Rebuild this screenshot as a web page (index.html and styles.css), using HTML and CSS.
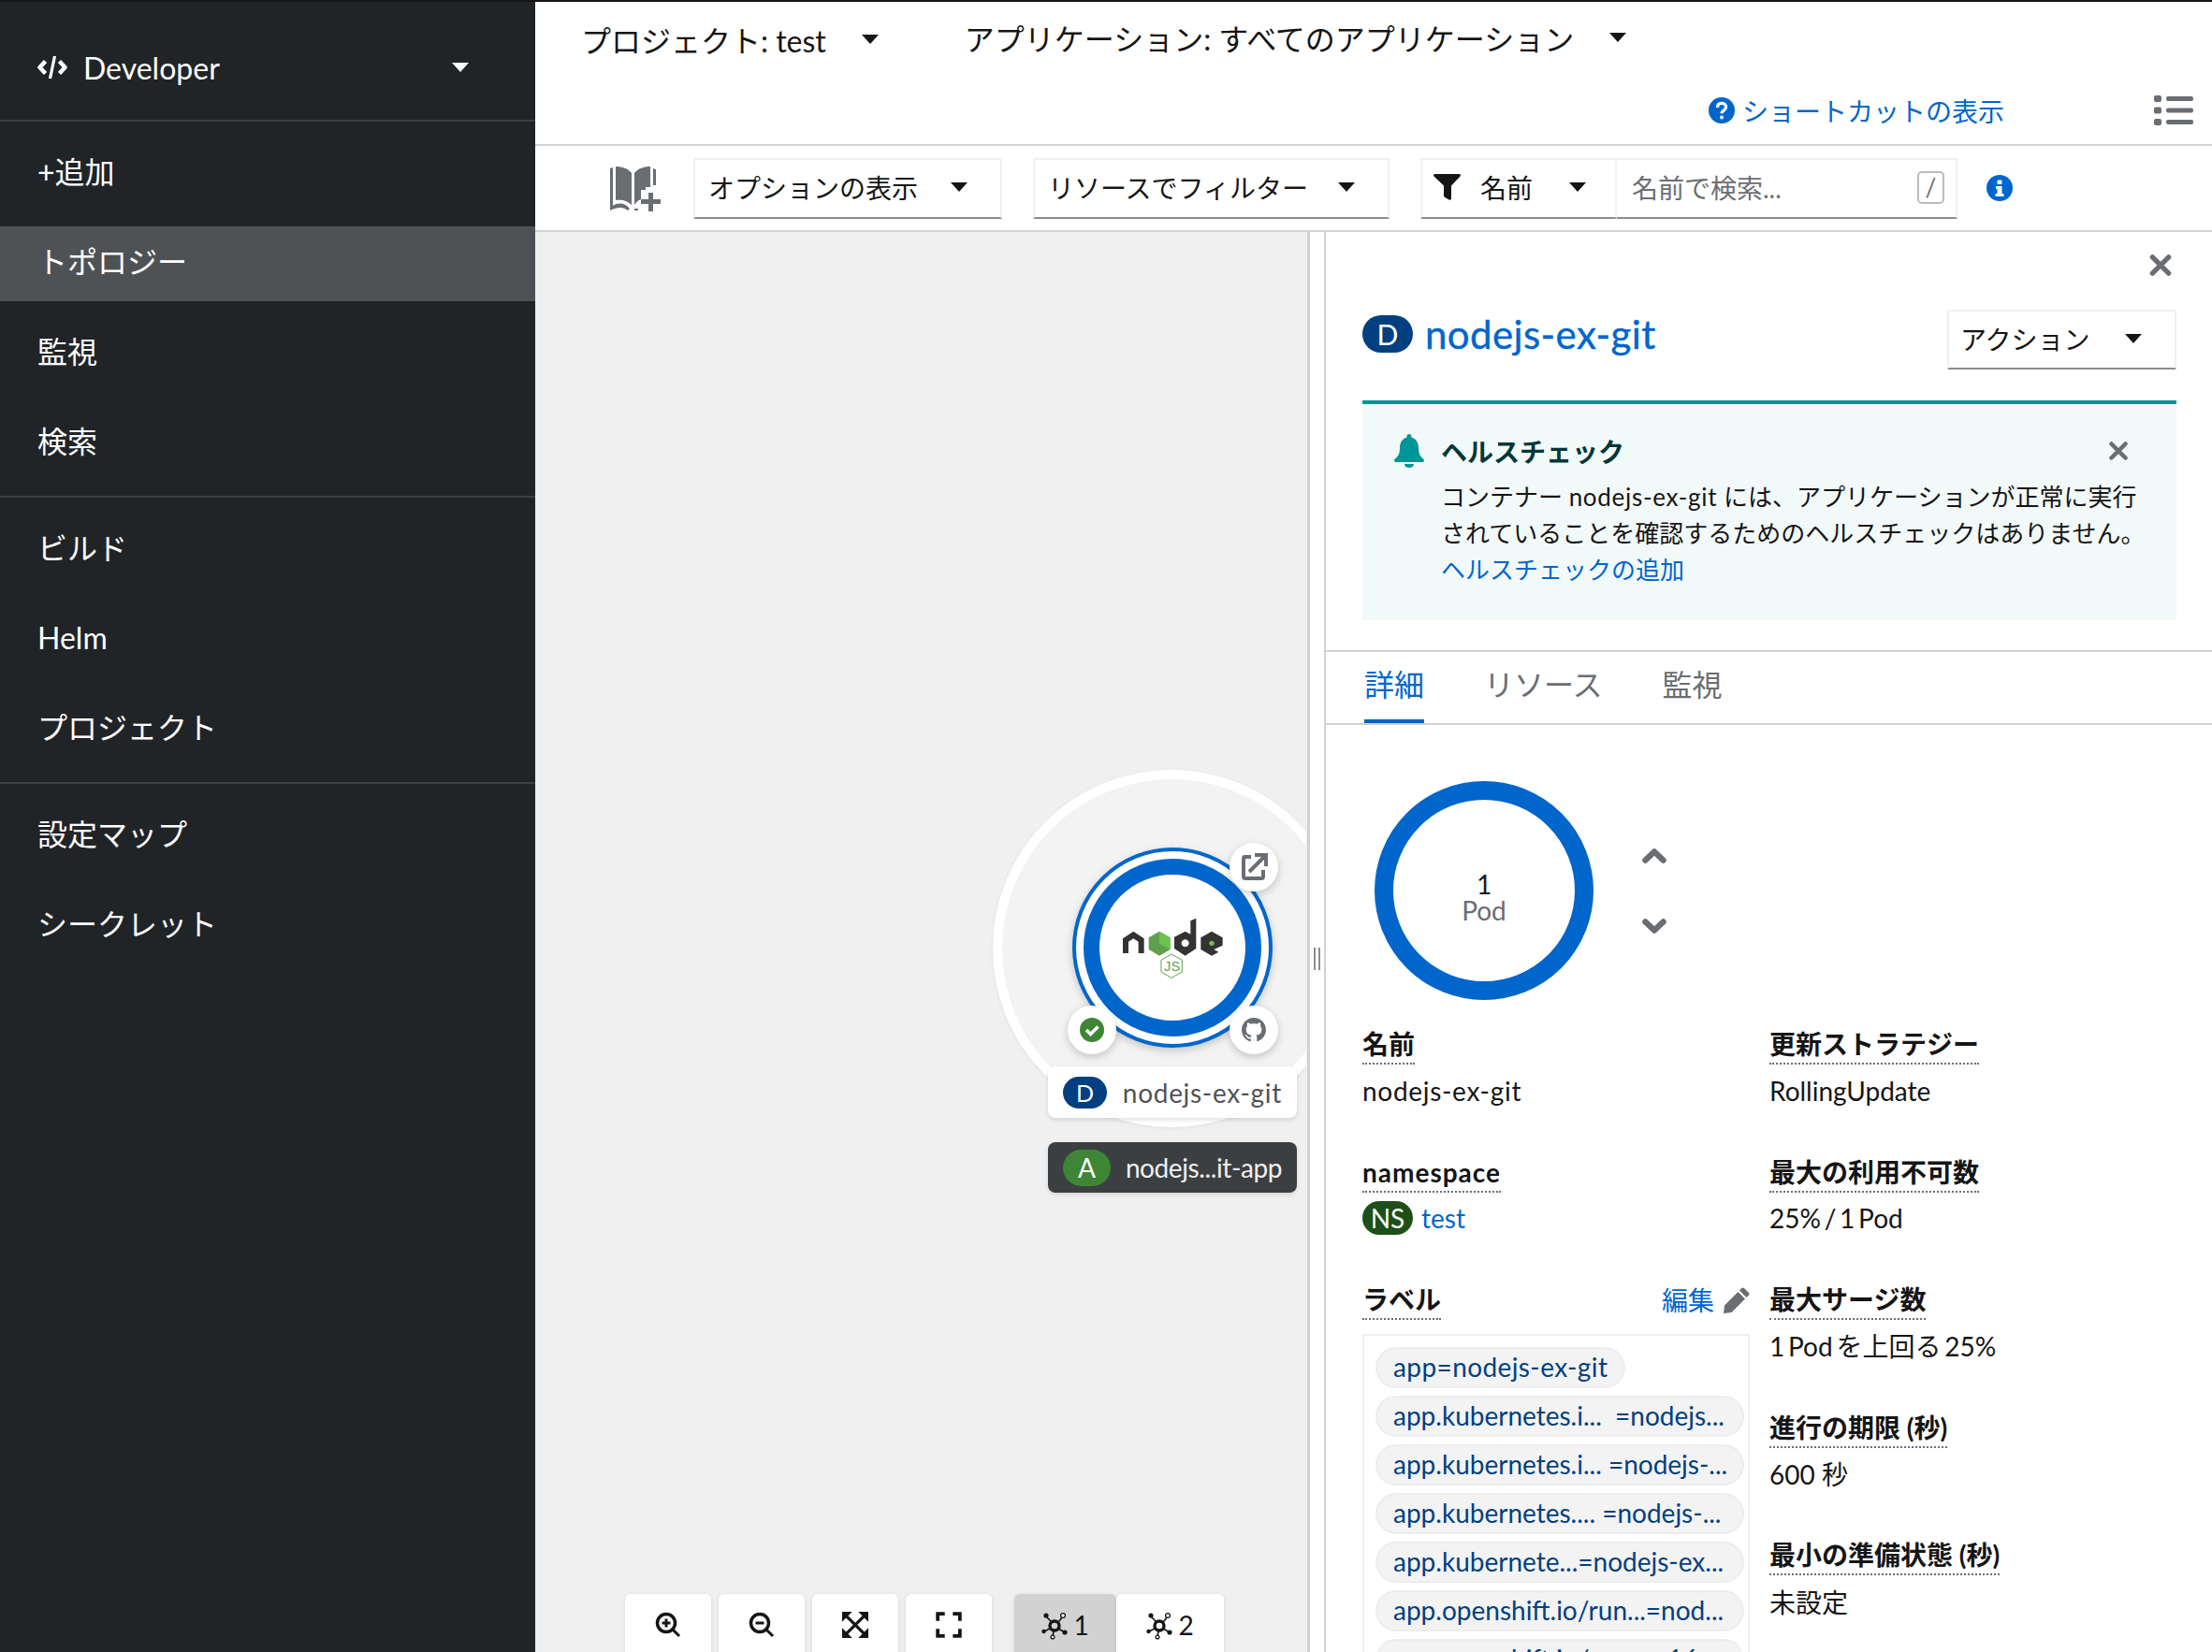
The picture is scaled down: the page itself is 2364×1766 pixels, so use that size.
FILE: index.html
```html
<!DOCTYPE html>
<html lang="ja">
<head>
  <meta charset="UTF-8" />
  <meta name="viewport" content="width=device-width, initial-scale=1.0"/>
  <title>トポロジー - Developer</title>
  <link rel="stylesheet" href="styles.css">
</head>
<body>

  <!-- Shared icons -->
  <svg class="defs" width="0" height="0">
    <symbol id="i-close" viewBox="0 0 24 24"><path d="M3 3 21 21M21 3 3 21" fill="none" stroke="currentColor" stroke-width="5.5" stroke-linecap="round"/></symbol>
    <symbol id="i-topology" viewBox="0 0 28 30">
      <g fill="none" stroke="currentColor" stroke-width="1.6"><path d="M5 5 11 11M18 11 23 5M9 18 3 21M18 18 25 22M13 21 12 26"/></g>
      <circle cx="14" cy="15" r="5" fill="none" stroke="currentColor" stroke-width="3.4"/>
      <circle cx="5" cy="4" r="2.6" fill="currentColor"/><circle cx="23" cy="4" r="2.4" fill="#fff" stroke="currentColor" stroke-width="1.3"/>
      <circle cx="2.5" cy="21" r="2.2" fill="currentColor"/><circle cx="25" cy="22" r="2.6" fill="currentColor"/>
      <circle cx="12" cy="27" r="1.9" fill="#fff" stroke="currentColor" stroke-width="1.3"/>
    </symbol>
  </svg>

  <div class="app">

    <!-- Sidebar -->
    <div class="sidebar">
      <div class="perspective">
        <svg class="code-icon" viewBox="0 0 32 28"><path d="M8.500 7.500 2.500 14l6 6.500M23.500 7.500l6 6.500-6 6.500" fill="none" stroke="#fff" stroke-width="4.500" stroke-linejoin="round"/><path d="M18.500 2 13.500 26" fill="none" stroke="#fff" stroke-width="3.200"/></svg>
        <span>Developer</span>
        <i class="caret caret-white"></i>
      </div>
      <div class="nav-group">
        <a class="nav-item">+追加</a>
        <a class="nav-item active">トポロジー</a>
        <a class="nav-item">監視</a>
        <a class="nav-item">検索</a>
      </div>
      <div class="nav-group">
        <a class="nav-item">ビルド</a>
        <a class="nav-item">Helm</a>
        <a class="nav-item">プロジェクト</a>
      </div>
      <div class="nav-group last">
        <a class="nav-item">設定マップ</a>
        <a class="nav-item">シークレット</a>
      </div>
    </div>

    <div class="main">

      <!-- Project bar -->
      <div class="topbar">
        <div class="selectors">
          <div class="selector project">プロジェクト: test<i class="caret"></i></div>
          <div class="selector">アプリケーション: すべてのアプリケーション<i class="caret"></i></div>
        </div>
        <div class="shortcuts">
          <a class="shortcut-link">
            <svg class="round-icon" viewBox="0 0 28 28"><circle cx="14" cy="14" r="14" fill="#06c"/><path d="M9.5 11c0-3 2-4.600 4.600-4.600s4.500 1.600 4.500 4.200c0 3.600-4.600 3.400-4.600 6.600" fill="none" stroke="#fff" stroke-width="3.200"/><circle cx="14" cy="21.500" r="2" fill="#fff"/></svg>
            ショートカットの表示
          </a>
          <svg class="list-icon" viewBox="0 0 42 32"><g fill="#6a6e73"><rect x="0" y="0" width="8" height="7" rx="2"/><rect x="0" y="12.500" width="8" height="7" rx="2"/><rect x="0" y="25" width="8" height="7" rx="2"/><rect x="13" y="1" width="29" height="5" rx="2"/><rect x="13" y="13.500" width="29" height="5" rx="2"/><rect x="13" y="26" width="29" height="5" rx="2"/></g></svg>
        </div>
      </div>

      <!-- Toolbar -->
      <div class="toolbar">
        <svg class="book-icon" viewBox="0 0 56 50">
          <path d="M0 4 3 3V44C9 40 16 41 21 47L19 49C14 45 8 45 0 49ZM6 2C13 2 19 4 23 9V43C18 38 12 37 6 38ZM43 2V24H38V27H33V37C30 38 28 40 26 43V9C30 4 36 2 43 2ZM46 4 49 5V22H46Z" fill="#6a6e73"/>
          <path d="M41 30h5v7h8v5h-8v8h-5v-8h-8v-5h8zM26 47h4v2h-4z" fill="#6a6e73"/>
        </svg>
        <div class="dropdown dd-options">オプションの表示<i class="caret"></i></div>
        <div class="dropdown dd-resources">リソースでフィルター<i class="caret"></i></div>
        <div class="filter-group">
          <div class="dropdown name-filter">
            <svg class="filter-icon" viewBox="0 0 29 28"><path d="M1.500 0h26c1.300 0 1.900 1.500 1 2.400L19 12.500V26c0 1.300-1.300 2.300-2.500 1.500l-5-3c-.6-.4-.5-.9-.5-1.500V12.500L.5 2.400C-.4 1.500.2 0 1.500 0z" fill="#151515"/></svg>
            名前<i class="caret"></i>
          </div>
          <div class="search-input">
            <span>名前で検索...</span>
            <span class="slash-key">/</span>
          </div>
        </div>
        <svg class="info-icon" viewBox="0 0 28 28"><circle cx="14" cy="14" r="14" fill="#06c"/><rect x="11.500" y="5.500" width="5" height="4.500" rx="1" fill="#fff"/><path d="M10 12h6.500v8H18.500v3H9.500v-3h2v-5H10z" fill="#fff"/></svg>
      </div>

      <div class="workspace">

        <!-- Topology canvas -->
        <div class="canvas">
          <svg class="graph" width="824" height="1518">
            <circle class="group-ring" cx="680" cy="766" r="186"/>
            <g class="soft-shadow">
              <circle cx="681" cy="765" r="105" fill="#fff" stroke="#06c" stroke-width="4"/>
              <circle cx="681" cy="765" r="86.500" fill="#fff" stroke="#06c" stroke-width="17"/>
            </g>
            <!-- node logo -->
            <g transform="translate(468 552) scale(.3333)">
              <polygon points="480,610 514,587 548,610 548,657 530,657 530,620 514,610 498,620 498,657 480,657" fill="#333"/>
              <polygon points="597,587 632,607 632,645 597,665 563,645 563,607" fill="#5fa04e"/>
              <polygon points="597,587 632,607 632,645 597,626" fill="#6cc24a"/>
              <path d="M715 545V642L680 665 645 642V605L680 587 697 596V553ZM680 613a12 12 0 1 0 .01 0Z" fill="#333" fill-rule="evenodd"/>
              <polygon points="730,607 765,587 800,607 800,632 772,645 787,653 765,665 730,645" fill="#333"/>
              <circle cx="765" cy="625" r="8" fill="#6cc24a"/>
              <polygon points="636,660 670,679 670,717 636,736 603,717 603,679" fill="#fff" stroke="#5fa04e" stroke-width="3"/>
              <text x="638" y="714" text-anchor="middle" class="js-mark">JS</text>
            </g>
            <!-- decorators -->
            <g class="soft-shadow">
              <circle cx="768" cy="679" r="26" fill="#fff"/>
              <circle cx="595" cy="853" r="26" fill="#fff"/>
              <circle cx="768" cy="853" r="26" fill="#fff"/>
            </g>
            <path d="M765 668H758Q757 668 757 670V689Q757 691 759 691H776Q778 691 778 689V682M763 684 779 668M769 666H781V678" fill="none" stroke="#6a6e73" stroke-width="4"/>
            <circle cx="595" cy="853" r="13" fill="#3e8635"/>
            <path d="M589 853l4.500 4.500 8-8" fill="none" stroke="#fff" stroke-width="3.500"/>
            <svg x="755" y="840" width="26" height="26" viewBox="0 0 16 16"><path fill="#6a6e73" d="M8 0C3.58 0 0 3.58 0 8c0 3.540 2.290 6.530 5.470 7.590.4.070.55-.17.55-.38 0-.19-.01-.82-.01-1.490-2.010.37-2.530-.49-2.690-.94-.09-.23-.48-.94-.82-1.130-.28-.15-.68-.52-.01-.53.63-.01 1.080.58 1.230.82.720 1.210 1.870.87 2.330.66.070-.52.28-.87.51-1.070-1.780-.2-3.640-.89-3.640-3.950 0-.87.31-1.590.82-2.150-.08-.2-.36-1.020.08-2.120 0 0 .67-.21 2.200.82.64-.18 1.320-.27 2-.27.68 0 1.360.09 2 .27 1.530-1.040 2.200-.82 2.200-.82.44 1.100.16 1.920.08 2.120.51.56.82 1.270.82 2.150 0 3.070-1.870 3.750-3.650 3.950.29.25.54.73.54 1.480 0 1.070-.01 1.930-.01 2.200 0 .21.15.46.55.38A8.013 8.013 0 0016 8c0-4.420-3.580-8-8-8z"/></svg>
          </svg>

          <div class="node-label">
            <span class="badge badge-d">D</span>
            <span class="wide-latin">nodejs-ex-git</span>
          </div>
          <div class="node-label app-label">
            <span class="badge badge-a">A</span>
            <span class="narrow-latin">nodejs...it-app</span>
          </div>

          <div class="controls">
            <div class="ctrl">
              <svg viewBox="0 0 28 28"><circle cx="12" cy="12" r="9.500" fill="none" stroke="#151515" stroke-width="3.500"/><path d="M12 7.500v9M7.500 12h9M19 19l7 7" fill="none" stroke="#151515" stroke-width="3"/></svg>
            </div>
            <div class="ctrl">
              <svg viewBox="0 0 28 28"><circle cx="12" cy="12" r="9.500" fill="none" stroke="#151515" stroke-width="3.500"/><path d="M7.500 12h9M19 19l7 7" fill="none" stroke="#151515" stroke-width="3"/></svg>
            </div>
            <div class="ctrl">
              <svg viewBox="0 0 26 26"><path d="M0 0H10L0 10ZM26 0V10L16 0ZM0 26V16L10 26ZM26 26H16L26 16Z" fill="#151515"/><path d="M4 4 22 22M22 4 4 22" fill="none" stroke="#151515" stroke-width="3"/></svg>
            </div>
            <div class="ctrl">
              <svg viewBox="0 0 26 26"><path d="M2 9V2H9M17 2H24V9M2 17V24H9M17 24H24V17" fill="none" stroke="#151515" stroke-width="3.500"/></svg>
            </div>
            <div class="ctrl-pair">
              <div class="ctrl ctrl-first selected"><svg class="topo-svg"><use href="#i-topology"/></svg>1</div>
              <div class="ctrl ctrl-second"><svg class="topo-svg"><use href="#i-topology"/></svg>2</div>
            </div>
          </div>
        </div>

        <!-- Resize handle -->
        <div class="splitter"><span class="grip"></span></div>

        <!-- Side panel -->
        <div class="panel">
          <div class="panel-close"><svg class="close-icon"><use href="#i-close"/></svg></div>

          <div class="panel-head">
            <div class="panel-title">
              <span class="badge badge-d badge-lg">D</span>
              <a class="title-link">nodejs-ex-git</a>
            </div>
            <div class="dropdown">アクション<i class="caret"></i></div>
          </div>

          <div class="alert">
            <svg class="bell-icon" viewBox="0 0 32 36"><path d="M16 0c1.500 0 2.500 1 2.500 2.500v1.300C24 5 26 10 26 15c0 6 2 9 5.500 12 .8.8.5 3-1.500 3H2c-2 0-2.300-2.200-1.500-3C4 24 6 21 6 15c0-5 2-10 7.500-11.200V2.500C13.500 1 14.500 0 16 0zM11 32h10c0 2.500-2.200 4-5 4s-5-1.500-5-4z" fill="#009596"/></svg>
            <div class="alert-body">
              <div class="alert-title">ヘルスチェック</div>
              <p>コンテナー <span class="wide-latin">nodejs-ex-git</span> には、アプリケーションが正常に実行<br>されていることを確認するためのヘルスチェックはありません。</p>
              <a class="link">ヘルスチェックの追加</a>
            </div>
            <svg class="alert-close"><use href="#i-close"/></svg>
          </div>

          <div class="tabs">
            <div class="tab active">詳細</div>
            <div class="tab">リソース</div>
            <div class="tab">監視</div>
          </div>

          <div class="pod-row">
            <div class="pod-ring">
              <span class="pod-count">1</span>
              <span class="pod-unit">Pod</span>
            </div>
            <div class="pod-arrows">
              <svg viewBox="0 0 26 16"><path d="M3.500 12.500 13 3.500 22.500 12.500" fill="none" stroke="#6a6e73" stroke-width="6.500" stroke-linecap="round" stroke-linejoin="round"/></svg>
              <svg viewBox="0 0 26 16"><path d="M3.500 3.500 13 12.500 22.500 3.500" fill="none" stroke="#6a6e73" stroke-width="6.500" stroke-linecap="round" stroke-linejoin="round"/></svg>
            </div>
          </div>

          <div class="details">
            <div class="details-col left">
              <div class="field">
                <div class="field-label"><span>名前</span></div>
                <div class="field-value"><span class="wide-latin">nodejs-ex-git</span></div>
              </div>
              <div class="field">
                <div class="field-label"><span class="wide-latin">namespace</span></div>
                <div class="field-value"><span class="badge badge-ns">NS</span><a class="link">test</a></div>
              </div>
              <div class="field-label label-row">
                <span>ラベル</span>
                <a class="edit-link">編集
                  <svg viewBox="0 0 28 28"><path d="M22 1l5 5c.8.8.8 1.800 0 2.600l-2.500 2.500-7.600-7.600L19.400 1c.8-.8 1.800-.8 2.600 0zM15.500 5l7.500 7.500L8.500 27 0 28l1-8.500z" fill="#6a6e73"/></svg>
                </a>
              </div>
              <div class="chips">
                <span class="chip first-chip">app=nodejs-ex-git</span>
                <span class="chip wide">app.kubernetes.i...&nbsp; =nodejs...</span>
                <span class="chip wide">app.kubernetes.i... =nodejs-...</span>
                <span class="chip wide">app.kubernetes.... =nodejs-...</span>
                <span class="chip wide">app.kubernete...=nodejs-ex...</span>
                <span class="chip wide">app.openshift.io/run...=nod...</span>
                <span class="chip wide">app.openshift.io/run... =16...</span>
              </div>
            </div>
            <div class="details-col">
              <div class="field">
                <div class="field-label"><span>更新ストラテジー</span></div>
                <div class="field-value">RollingUpdate</div>
              </div>
              <div class="field">
                <div class="field-label"><span>最大の利用不可数</span></div>
                <div class="field-value tight-words">25% / 1 Pod</div>
              </div>
              <div class="field">
                <div class="field-label"><span>最大サージ数</span></div>
                <div class="field-value tight-words">1 Pod を上回る 25%</div>
              </div>
              <div class="field">
                <div class="field-label"><span>進行の期限 (秒)</span></div>
                <div class="field-value">600 秒</div>
              </div>
              <div class="field">
                <div class="field-label"><span>最小の準備状態 (秒)</span></div>
                <div class="field-value">未設定</div>
              </div>
            </div>
          </div>
        </div>

      </div>
    </div>
  </div>

</body>
</html>
```

FILE: styles.css
```css
* {
  box-sizing: border-box;
}

html, body {
  height: 100%;
  margin: 0;
}

body {
  font-family: Lato, "Noto Sans CJK JP", sans-serif;
  font-size: 28px;
  color: #151515;
  background: #fff;
  overflow: hidden;
}

a {
  text-decoration: none;
}

p {
  margin: 0;
}

.defs {
  position: absolute;
}

.wide-latin {
  letter-spacing: 0.7px;
}

.narrow-latin {
  letter-spacing: -0.4px;
}

.tight-words {
  word-spacing: -3.4px;
}

.app {
  display: flex;
  width: 2364px;
  height: 1766px;
  border-top: 2px solid #151515;
  overflow: hidden;
}

.caret {
  display: inline-block;
  width: 0;
  height: 0;
  border-left: 9px solid transparent;
  border-right: 9px solid transparent;
  border-top: 10px solid #151515;
  flex-shrink: 0;
}

.caret-white {
  border-top-color: #fff;
}

/* Sidebar */
.sidebar {
  width: 572px;
  flex-shrink: 0;
  background: #212427;
  color: #fff;
  font-size: 32px;
}

.perspective {
  height: 128px;
  display: flex;
  align-items: center;
  padding: 14px 71px 0 40px;
  border-bottom: 2px solid #3c3f42;
}

.code-icon {
  width: 32px;
  height: 28px;
  margin-right: 17px;
}

.perspective .caret {
  margin-left: auto;
}

.nav-group {
  display: flex;
  flex-direction: column;
  gap: 16px;
  padding: 16px 0;
  border-bottom: 2px solid #3c3f42;
}

.nav-group.last {
  border-bottom: none;
}

.nav-item {
  height: 80px;
  line-height: 76px;
  padding-left: 40px;
  color: #fff;
}

.nav-item.active {
  background: #4f5255;
}

/* Main */
.main {
  flex: 1;
  display: flex;
  flex-direction: column;
  min-width: 0;
}

.topbar {
  height: 154px;
  border-bottom: 2px solid #d2d2d2;
  flex-shrink: 0;
}

.selectors {
  display: flex;
  height: 78px;
  padding-left: 49px;
  align-items: center;
  font-size: 32px;
}

.selector {
  display: flex;
  align-items: center;
  gap: 38px;
  margin-right: 92px;
  margin-top: -2px;
}

.selector.project {
  margin-top: 2px;
}

.shortcuts {
  display: flex;
  align-items: center;
  justify-content: flex-end;
  height: 76px;
  padding-right: 20px;
}

.shortcut-link {
  display: flex;
  align-items: center;
  gap: 8px;
  color: #06c;
  margin-right: 160px;
}

.round-icon {
  width: 28px;
  height: 28px;
}

.list-icon {
  width: 42px;
  height: 32px;
}

.toolbar {
  height: 92px;
  flex-shrink: 0;
  display: flex;
  align-items: center;
  gap: 33px;
  padding-left: 80px;
  border-bottom: 2px solid #d2d2d2;
}

.book-icon {
  width: 56px;
  height: 50px;
}

.dropdown {
  height: 65px;
  display: flex;
  align-items: center;
  justify-content: space-between;
  padding: 0 35px 2px 14px;
  border: 2px solid #f0f0f0;
  border-bottom-color: #8a8d90;
  background: #fff;
  white-space: nowrap;
  flex-shrink: 0;
}

.dd-options {
  width: 330px;
}

.dd-resources {
  width: 381px;
}

.filter-group {
  display: flex;
}

.name-filter {
  width: 210px;
  padding-left: 12px;
  justify-content: flex-start;
}

.filter-icon {
  width: 29px;
  height: 28px;
  margin-right: 21px;
  flex-shrink: 0;
}

.name-filter .caret {
  margin-left: 39px;
}

.search-input {
  width: 364px;
  height: 65px;
  display: flex;
  align-items: center;
  justify-content: space-between;
  padding: 0 12px 2px 16px;
  border: 2px solid #f0f0f0;
  border-left: none;
  border-bottom-color: #8a8d90;
  color: #6a6e73;
}

.slash-key {
  width: 29px;
  height: 35px;
  border: 2px solid #b8bbbe;
  border-radius: 5px;
  text-align: center;
  line-height: 30px;
  font-size: 26px;
}

.info-icon {
  width: 28px;
  height: 28px;
  margin-left: -2px;
}

/* Topology canvas and panel */
.workspace {
  flex: 1;
  display: flex;
  min-height: 0;
}

.canvas {
  position: relative;
  width: 825px;
  flex-shrink: 0;
  background: #f0f0f0;
  overflow: hidden;
}

.graph {
  position: absolute;
  left: 0;
  top: 0;
}

.group-ring {
  fill: #f3f3f3;
  stroke: #fff;
  stroke-width: 10px;
  filter: drop-shadow(0 1px 2px rgba(0,0,0,0.06));
}

.soft-shadow {
  filter: drop-shadow(0 3px 4px rgba(3,3,3,0.2));
}

.js-mark {
  font-family: "Liberation Sans", sans-serif;
  font-size: 44px;
  fill: #5fa04e;
}

.node-label {
  position: absolute;
  left: 548px;
  top: 892px;
  width: 266px;
  height: 55px;
  display: flex;
  align-items: center;
  justify-content: space-between;
  padding: 0 16px;
  background: #fff;
  border-radius: 8px;
  color: #4f5255;
  box-shadow: 0 2px 5px rgba(3,3,3,0.12);
}

.app-label {
  top: 973px;
  height: 54px;
  background: #3c3f42;
  color: #f0f0f0;
}

.badge {
  display: inline-flex;
  align-items: center;
  justify-content: center;
  color: #fff;
  border-radius: 20px;
}

.badge-d {
  width: 47px;
  height: 34px;
  background: #004080;
  font-size: 25px;
}

.badge-a {
  width: 51px;
  height: 39px;
  background: #3e8635;
}

.badge-lg {
  width: 54px;
  height: 40px;
  font-size: 30px;
}

.badge-ns {
  width: 54px;
  height: 36px;
  background: #1e4f18;
  margin-right: 9px;
}

.controls {
  position: absolute;
  left: 96px;
  top: 1456px;
  display: flex;
  gap: 8px;
}

.ctrl {
  width: 92px;
  height: 100px;
  background: #fff;
  border-radius: 6px;
  padding-top: 19px;
  display: flex;
  justify-content: center;
  align-items: flex-start;
  gap: 6px;
  line-height: 28px;
  box-shadow: 0 1px 4px rgba(3,3,3,0.12);
}

.ctrl svg {
  width: 28px;
  height: 28px;
}

.ctrl-pair {
  display: flex;
  margin-left: 16px;
}

.ctrl .topo-svg {
  width: 28px;
  height: 30px;
}

.ctrl-first {
  width: 109px;
}

.ctrl-second {
  width: 115px;
}

.ctrl-first.selected {
  background: #d2d2d2;
}

.splitter {
  width: 20px;
  flex-shrink: 0;
  display: flex;
  align-items: flex-start;
  justify-content: center;
  background: #fff;
  border-left: 3px solid #d2d2d2;
  border-right: 2px solid #d2d2d2;
}

.grip {
  width: 7px;
  height: 24px;
  margin-top: 765px;
  border-left: 2px solid #8a8d90;
  border-right: 2px solid #8a8d90;
}

.panel {
  flex: 1;
  min-width: 0;
  padding: 0 38px 0 39px;
  overflow: hidden;
}

.panel-close {
  display: flex;
  justify-content: flex-end;
  height: 47px;
  padding: 24px 5px 0 0;
  margin-bottom: 36px;
}

.close-icon {
  width: 24px;
  height: 23px;
  color: #6a6e73;
}

.panel-head {
  display: flex;
  justify-content: space-between;
  align-items: flex-start;
  margin-bottom: 33px;
}

.panel-head .dropdown {
  width: 245px;
  height: 64px;
  padding-left: 12px;
}

.panel-title {
  display: flex;
  align-items: center;
  height: 52px;
  gap: 13px;
}

.title-link {
  font-size: 42px;
  letter-spacing: 0.4px;
  -webkit-text-stroke: 0.4px #06c;
  color: #06c;
}

.alert {
  position: relative;
  display: flex;
  height: 235px;
  padding: 32px 0 0 34px;
  background: #f2f9f9;
  border-top: 4px solid #009596;
  font-size: 26px;
  line-height: 39px;
}

.bell-icon {
  width: 32px;
  height: 36px;
  margin-right: 18px;
  flex-shrink: 0;
}

.alert-title {
  font-size: 28px;
  font-weight: 700;
  color: #003737;
  line-height: 38px;
  margin-bottom: 10px;
}

.alert-close {
  position: absolute;
  right: 52px;
  top: 40px;
  width: 20px;
  height: 20px;
  color: #6a6e73;
}

.link {
  color: #06c;
}

.tabs {
  display: flex;
  gap: 64px;
  height: 80px;
  margin: 32px -38px 0 -39px;
  padding-left: 41px;
  border-top: 2px solid #d2d2d2;
  border-bottom: 2px solid #d2d2d2;
  font-size: 32px;
  color: #6a6e73;
}

.tab {
  height: 76px;
  line-height: 70px;
  border-bottom: 4px solid transparent;
}

.tab.active {
  color: #06c;
  border-bottom-color: #06c;
}

.pod-row {
  display: flex;
  align-items: center;
  gap: 52px;
  margin: 60px 0 27px 13px;
}

.pod-ring {
  width: 234px;
  height: 234px;
  border: 20px solid #06c;
  border-radius: 50%;
  display: flex;
  flex-direction: column;
  align-items: center;
  justify-content: center;
  padding-top: 14px;
  line-height: 28px;
}

.pod-unit {
  color: #6a6e73;
}

.pod-arrows {
  display: flex;
  flex-direction: column;
  gap: 59px;
}

.pod-arrows svg {
  display: block;
  width: 26px;
  height: 16px;
}

.details {
  display: flex;
  gap: 21px;
}

.details-col {
  flex: 1;
  min-width: 0;
}

.details-col.left {
  flex: 0 0 414px;
}

.field {
  margin-bottom: 46px;
}

.field-label {
  height: 42px;
  margin-bottom: 6.5px;
  font-weight: 700;
  line-height: 40px;
}

.field-label > span {
  display: inline-block;
  height: 42px;
  border-bottom: 2px dotted #6a6e73;
}

.field-label > .wide-latin {
  letter-spacing: 1px;
}

.field-value {
  display: flex;
  align-items: center;
  height: 42px;
}

.tight-words {
  display: block;
  line-height: 42px;
}

.label-row {
  display: flex;
  justify-content: space-between;
  margin-bottom: 15px;
}

.edit-link {
  display: flex;
  align-items: center;
  gap: 10px;
  font-weight: 400;
  color: #06c;
}

.edit-link svg {
  width: 28px;
  height: 28px;
}

.chips {
  display: flex;
  flex-direction: column;
  align-items: flex-start;
  gap: 8px;
  height: 400px;
  padding: 12px 4px 0 12px;
  border: 2px solid #f0f0f0;
  border-bottom: none;
}

.chip {
  height: 44px;
  line-height: 38px;
  padding: 0 17px;
  background: #f3f3f3;
  border: 2px solid #ededed;
  border-radius: 22px;
  color: #004080;
  white-space: nowrap;
  overflow: hidden;
}

.first-chip {
  letter-spacing: 0.4px;
}

.chip.wide {
  width: 100%;
}
```
